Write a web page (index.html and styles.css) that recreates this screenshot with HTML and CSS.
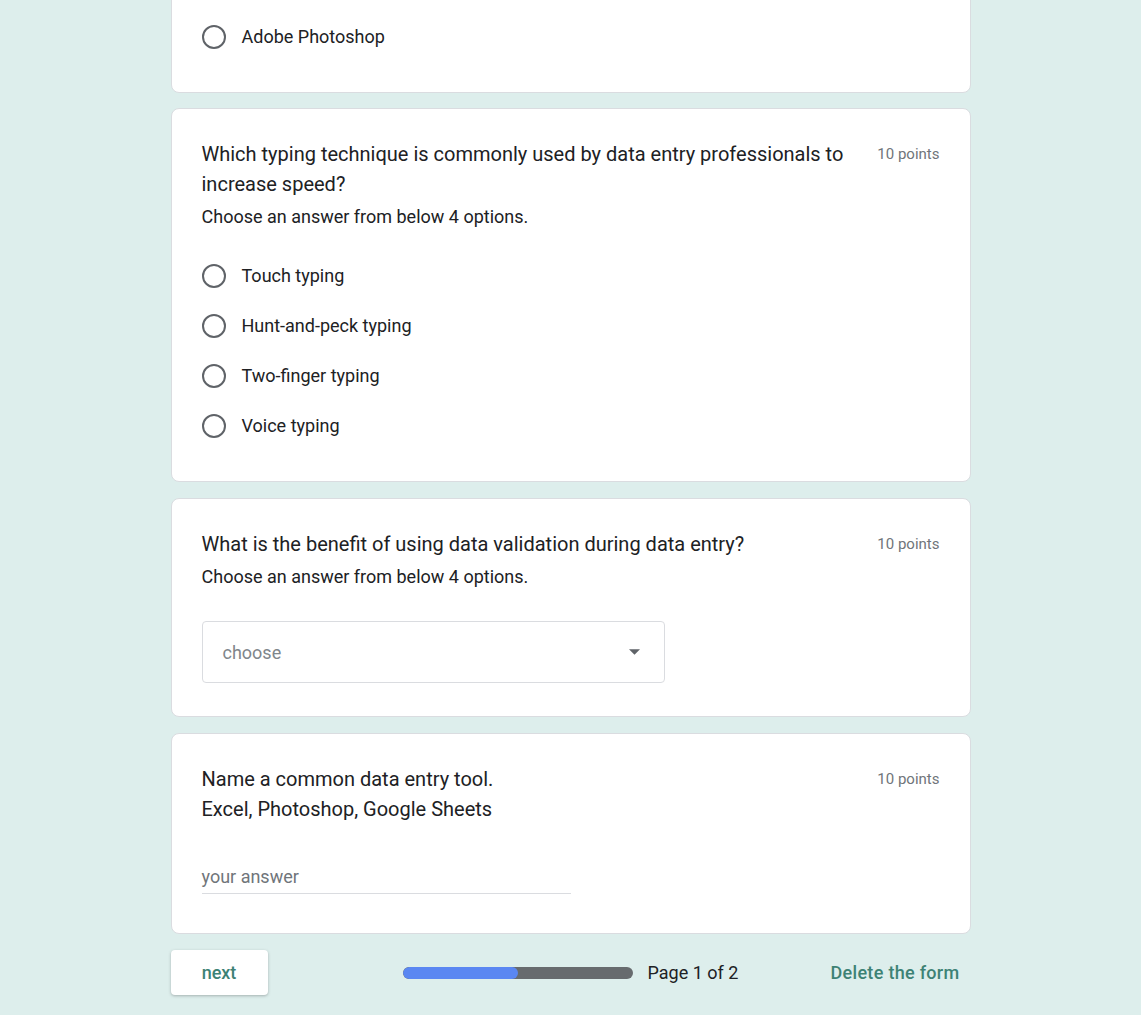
FILE: index.html
```html
<!DOCTYPE html>
<html lang="en">
<head>
<meta charset="utf-8">
<title>Form</title>
<link rel="stylesheet" href="styles.css">
</head>
<body>
<main class="form">
  <section class="card card-first">
    <ul class="options">
      <li class="option"><span class="radio"></span><span class="option-label">Adobe Photoshop</span></li>
    </ul>
  </section>

  <section class="card">
    <div class="q-head">
      <div class="q-text">
        <div class="q-title">Which typing technique is commonly used by data entry professionals to increase speed?</div>
        <div class="q-sub">Choose an answer from below 4 options.</div>
      </div>
      <div class="points">10 points</div>
    </div>
    <ul class="options options-spaced">
      <li class="option"><span class="radio"></span><span class="option-label">Touch typing</span></li>
      <li class="option"><span class="radio"></span><span class="option-label">Hunt-and-peck typing</span></li>
      <li class="option"><span class="radio"></span><span class="option-label">Two-finger typing</span></li>
      <li class="option"><span class="radio"></span><span class="option-label">Voice typing</span></li>
    </ul>
  </section>

  <section class="card card-select">
    <div class="q-head">
      <div class="q-text">
        <div class="q-title">What is the benefit of using data validation during data entry?</div>
        <div class="q-sub">Choose an answer from below 4 options.</div>
      </div>
      <div class="points">10 points</div>
    </div>
    <div class="select">
      <span class="select-text">choose</span>
      <svg class="select-arrow" width="11" height="6" viewBox="0 0 10 5"><path d="M0 0h10L5 5z" fill="#5f6368"/></svg>
    </div>
  </section>

  <section class="card card-input">
    <div class="q-head">
      <div class="q-text">
        <div class="q-title">Name a common data entry tool.</div>
        <div class="q-title">Excel, Photoshop, Google Sheets</div>
      </div>
      <div class="points">10 points</div>
    </div>
    <div class="text-input">your answer</div>
  </section>

  <nav class="footer">
    <button class="btn-next">next</button>
    <div class="progress-group">
      <div class="progress"><div class="progress-fill" style="width:50%"></div></div>
      <span class="page-label">Page 1 of 2</span>
    </div>
    <button class="btn-delete">Delete the form</button>
  </nav>
</main>
</body>
</html>
```

FILE: styles.css
```css
* { box-sizing: border-box; }
html, body { margin: 0; padding: 0; }
body {
  background: #ddeeec;
  font-family: Roboto, "Liberation Sans", Arial, sans-serif;
  color: #202124;
  overflow: hidden;
}
.form {
  width: 800px;
  margin: 0 auto;
  padding-bottom: 20px;
  display: flex;
  flex-direction: column;
  gap: 16px;
}
.card {
  background: #fff;
  border: 1px solid #dadce0;
  border-radius: 8px;
  padding: 30px;
}
.card-first {
  margin-top: -19px;
}
.card-first + .card { margin-top: -1px; }
.q-head {
  display: flex;
  align-items: flex-start;
  gap: 24px;
}
.q-text { flex: 1; }
.q-title {
  font-size: 20px;
  line-height: 30px;
  color: #202124;
}
.q-sub {
  font-size: 18px;
  line-height: 24px;
  margin-top: 6px;
  color: #202124;
}
.points {
  font-size: 15px;
  line-height: 30px;
  color: #70757a;
  white-space: nowrap;
}
.options {
  list-style: none;
  margin: 0;
  padding: 0;
}
.options-spaced { margin-top: 22px; }
.option {
  display: flex;
  align-items: center;
  height: 50px;
  gap: 16px;
}
.radio {
  width: 24px;
  height: 24px;
  border: 2px solid #5f6368;
  border-radius: 50%;
  flex: none;
}
.option-label {
  font-size: 18px;
  line-height: 24px;
  color: #202124;
}
.card-select { padding-bottom: 33px; }
.select {
  margin-top: 32px;
  width: 463px;
  height: 62px;
  border: 1px solid #dadce0;
  border-radius: 4px;
  display: flex;
  align-items: center;
  justify-content: space-between;
  padding: 0 24px 0 20px;
}
.select-text {
  font-size: 18px;
  color: #80868b;
}
.card-input { padding-bottom: 39px; }
.text-input {
  margin-top: 38px;
  width: 369px;
  padding: 3px 0 4px;
  font-size: 18px;
  line-height: 24px;
  color: #70757a;
  border-bottom: 1px solid #dadce0;
}
.footer {
  display: flex;
  align-items: center;
  height: 45px;
}
.btn-next {
  width: 97px;
  height: 45px;
  background: #fff;
  border: none;
  border-radius: 4px;
  box-shadow: 0 1px 3px rgba(60,64,67,0.35);
  font-family: Roboto, "Liberation Sans", Arial, sans-serif;
  font-size: 18px;
  font-weight: 500;
  color: #3d8275;
  padding: 0;
}
.progress-group {
  display: flex;
  align-items: center;
  gap: 15px;
  margin-left: 135px;
}
.progress {
  width: 230px;
  height: 12px;
  border-radius: 6px;
  background: #676b6e;
  overflow: hidden;
}
.progress-fill {
  height: 100%;
  background: #5a87f2;
  border-radius: 6px;
}
.page-label {
  font-size: 18px;
  color: #202124;
}
.btn-delete {
  margin-left: auto;
  margin-right: 11px;
  background: none;
  border: none;
  padding: 0;
  font-family: Roboto, "Liberation Sans", Arial, sans-serif;
  font-size: 18px;
  font-weight: 500;
  letter-spacing: 0.3px;
  color: #3d8275;
}
```
